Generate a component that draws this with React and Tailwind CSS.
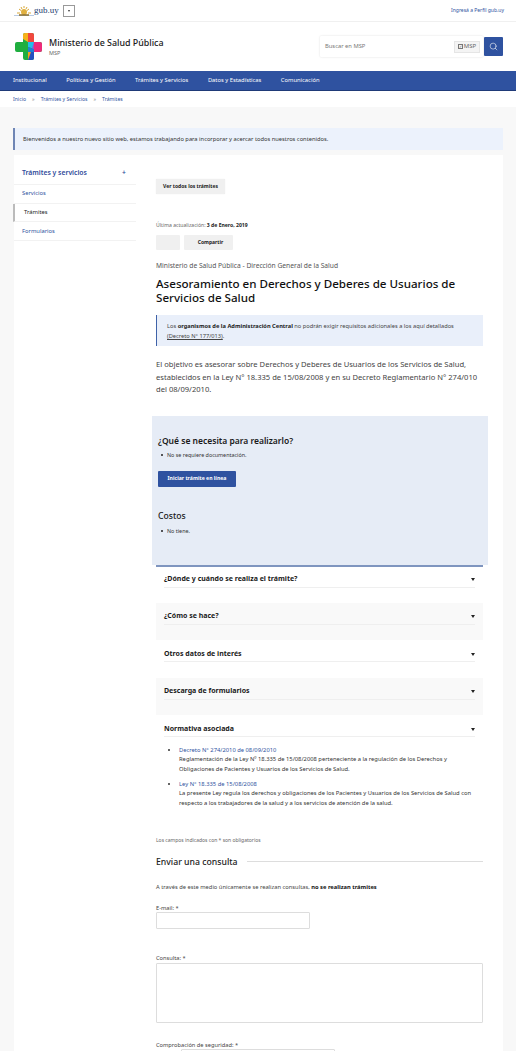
import { Search } from "lucide-react";

const navItems = ["Institucional", "Políticas y Gestión", "Trámites y Servicios", "Datos y Estadísticas", "Comunicación"];

function Logo() {
  return (
    <svg width="27" height="27" viewBox="0 0 27 27">
      <path d="M8 2a2 2 0 0 1 2-2h7a2 2 0 0 1 2 2v7h6a2 2 0 0 1 2 2v6a2 2 0 0 1-2 2h-6v6a2 2 0 0 1-2 2h-7a2 2 0 0 1-2-2v-6H2a2 2 0 0 1-2-2v-6a2 2 0 0 1 2-2h6z" fill="#1fae3f" />
      <path d="M10 0h3v9L8 6V2a2 2 0 0 1 2-2z" fill="#f6b21b" />
      <path d="M13 0h4a2 2 0 0 1 2 2v7h-6z" fill="#f0483e" />
      <path d="M19 9h6a2 2 0 0 1 2 2v6a2 2 0 0 1-2 2h-6z" fill="#ee2a7b" />
      <path d="M13 9h6v7l-6-2z" fill="#22bfe8" />
      <path d="M19 9v10h-3z" fill="#a24bd0" />
      <path d="M13 14l6 2v3h-6z" fill="#1f7fd6" />
      <path d="M13 19h6v6a2 2 0 0 1-2 2h-4z" fill="#2451c0" />
      <path d="M13 19h3l-3 8z" fill="#f2a01e" />
    </svg>
  );
}

function SunLogo() {
  return (
    <svg width="20" height="10" viewBox="0 0 20 10">
      <path d="M0 9.5h20" stroke="#b9cbe3" strokeWidth="1" />
      <circle cx="10" cy="6" r="3" fill="#e0b040" />
      <path d="M10 0v2M5 3l2 1.5M15 3l-2 1.5M3 7h3M17 7h-3M7 1l1 2M13 1l-1 2" stroke="#d9a83a" strokeWidth="1" />
      <path d="M5 9h10" stroke="#8a6d2a" strokeWidth="1.5" />
    </svg>
  );
}

function Accordion({ title, shaded, first, children }) {
  return (
    <div className={`px-[8px] ${first ? "pt-[5px]" : "pt-[6px]"} ${children ? "pb-0" : first ? "pb-[15px]" : "pb-[15.5px]"} ${shaded ? "bg-[#f9f9f9]" : "bg-white"}`}>
      <div className="flex h-[16px] items-center justify-between border-b border-[#efefef] pt-[1px]">
        <span className="text-[7px] font-bold text-[#1a1a1a]">{title}</span>
        <span className="h-0 w-0 border-x-[2px] border-t-[3px] border-x-transparent border-t-[#222]" />
      </div>
      {children}
    </div>
  );
}

function Bullet({ children }) {
  return (
    <div className="flex items-center gap-[4px] pl-[3px] text-[5.4px] leading-[10px] text-[#333]">
      <span className="h-[2px] w-[2px] rounded-full bg-[#222]" />
      {children}
    </div>
  );
}

export default function App() {
  return (
    <div className="h-[1051px] overflow-hidden bg-[#f8f8f8] font-['Noto_Sans',sans-serif] text-[#222]">
      {/* gub.uy bar */}
      <div className="flex h-[22px] items-center justify-between border-b border-[#f0f0f0] bg-white pl-[14px] pr-[12px]">
        <div className="flex items-center">
          <SunLogo />
          <span className="font-['Liberation_Serif',serif] text-[9px] text-[#23406f]">gub.uy</span>
          <span className="ml-[4px] flex h-[12px] w-[12px] items-center justify-center border border-[#999]">
            <span className="h-0 w-0 border-x-[1.5px] border-t-[2px] border-x-transparent border-t-[#333]" />
          </span>
        </div>
        <span className="text-[5px] text-[#2f52a0]">Ingresá a Perfil gub.uy</span>
      </div>

      {/* header */}
      <div className="flex h-[49px] items-center justify-between bg-white pl-[15px] pr-[13px]">
        <div className="flex items-center">
          <Logo />
          <div className="ml-[7px]">
            <div className="text-[8.9px] font-medium leading-[13px] text-[#1a1a1a]">Ministerio de Salud Pública</div>
            <div className="text-[5.5px] leading-[8px] text-[#666]">MSP</div>
          </div>
        </div>
        <div className="flex items-center">
          <div className="flex h-[21px] w-[163px] items-center justify-between rounded-[1px] bg-white pl-[5px] pr-[3px] shadow-[0_0_2px_rgba(0,0,0,0.15)]">
            <span className="text-[5.8px] text-[#777]">Buscar en MSP</span>
            <span className="flex h-[12px] w-[26px] items-center justify-center gap-[1px] border border-[#e5e5e5] bg-[#f4f4f4] text-[6px] text-[#666]">
              <span className="flex h-[5px] w-[5px] items-center justify-center border border-[#777] text-[4px] leading-none">✓</span>
              MSP
            </span>
          </div>
          <div className="ml-[1px] flex h-[19px] w-[19px] items-center justify-center rounded-[1px] bg-[#2f52a0]">
            <Search size={9} color="#fff" strokeWidth={1.5} />
          </div>
        </div>
      </div>

      {/* nav */}
      <div className="flex h-[20px] items-center gap-[19.5px] border-b border-[#1f3a78] bg-[#2f52a0] pl-[13px] text-[5.8px] text-white">
        {navItems.map((item) => (
          <span key={item}>{item}</span>
        ))}
      </div>

      {/* breadcrumb */}
      <div className="flex h-[16px] items-center gap-[6px] bg-white pl-[13px] pt-[1px] text-[5.1px] text-[#2f52a0]">
        <span>Inicio</span>
        <span className="text-[#888]">»</span>
        <span>Trámites y Servicios</span>
        <span className="text-[#888]">»</span>
        <span>Trámites</span>
      </div>

      {/* welcome */}
      <div className="px-[13px] pt-[21px]">
        <div className="flex h-[22px] w-[490px] items-center border-l-2 border-[#6f86b5] bg-[#ecf2fc] pl-[8px] text-[5.75px] text-[#333]">
          Bienvenidos a nuestro nuevo sitio web, estamos trabajando para incorporar y acercar todos nuestros contenidos.
        </div>
      </div>

      <div className="ml-[14px] mt-[5px] flex w-[489px]">
        {/* sidebar */}
        <aside className="w-[122px] shrink-0 bg-white text-[5.8px]">
          <div className="flex h-[30px] items-center justify-between border-b border-[#f2f2f2] pl-[8px] pr-[10px] pt-[8px] text-[6.8px] font-semibold text-[#2f4a9a]">
            <span>Trámites y servicios</span>
            <span>+</span>
          </div>
          <div className="flex h-[18.5px] items-center border-b border-[#f2f2f2] pl-[8px] text-[#2f52a0]">Servicios</div>
          <div className="-ml-[1px] flex h-[18.5px] items-center border-b border-l-2 border-[#f2f2f2] border-l-[#bbb] pl-[9px] text-[#222]">Trámites</div>
          <div className="flex h-[19px] items-center border-b border-[#f2f2f2] pl-[8px] text-[#2f52a0]">Formularios</div>
        </aside>

        {/* main */}
        <main className="min-w-0 flex-1 bg-white px-[20px] pt-[24px]">
          <button className="block h-[15px] w-[69px] rounded-[1px] bg-[#f0f0f0] text-[5px] font-bold text-[#222] shadow-[0_0_1px_rgba(0,0,0,0.15)]">Ver todos los trámites</button>

          <p className="mt-[27px] text-[5.1px] leading-[8px] text-[#666]">
            Última actualización: <b className="text-[#222]">3 de Enero, 2019</b>
          </p>
          <div className="mt-[6px] flex gap-[4px]">
            <span className="h-[15px] w-[24px] rounded-[1px] bg-[#f0f0f0]" />
            <span className="flex h-[15px] w-[49px] items-center justify-center rounded-[1px] bg-[#f0f0f0] pl-[4px] text-[5px] font-bold">Compartir</span>
          </div>
          <p className="mt-[11px] text-[6.7px] leading-[9px] text-[#555]">Ministerio de Salud Pública - Dirección General de la Salud</p>
          <h1 className="mt-[7px] text-[11.6px] font-medium leading-[14px] text-[#111]">Asesoramiento en Derechos y Deberes de Usuarios de Servicios de Salud</h1>

          <div className="mt-[10px] h-[31px] w-[327px] border-l-[1px] border-[#3f62a8] bg-[#e9effa] pl-[10px] pr-[14px] pt-[6px] text-[5.7px] leading-[10px] text-[#444]">
            Los <b className="text-[#222]">organismos de la Administración Central</b> no podrán exigir requisitos adicionales a los aquí detallados <span className="underline">(Decreto N° 177/013)</span>.
          </div>

          <p className="mt-[12px] w-[327px] text-[7.6px] leading-[12.5px] text-[#444]">
            El objetivo es asesorar sobre Derechos y Deberes de Usuarios de los Servicios de Salud, establecidos en la Ley N° 18.335 de 15/08/2008 y en su Decreto Reglamentario N° 274/010 del 08/09/2010.
          </p>

          {/* requisitos: sobresale 4px de cada lado */}
          <section className="-mx-[4px] mt-[20px] h-[149px] w-[336px] bg-[#e6ecf6] pl-[6px] pt-[18px]">
            <h2 className="text-[8.5px] font-semibold leading-[13px] text-[#1a1a1a]">¿Qué se necesita para realizarlo?</h2>
            <div className="mt-[3px]">
              <Bullet>No se requiere documentación.</Bullet>
            </div>
            <button className="mt-[11px] block h-[16px] w-[78px] rounded-[1px] bg-[#2f52a0] text-[5.15px] font-bold text-white">Iniciar trámite en línea</button>
            <h2 className="mt-[23px] text-[8.6px] font-medium leading-[13px] text-[#1a1a1a]">Costos</h2>
            <div className="mt-[3px]">
              <Bullet>No tiene.</Bullet>
            </div>
          </section>

          <div className="w-[327px] border-t-2 border-[#7f95bf]">
            <Accordion first title="¿Dónde y cuándo se realiza el trámite?" />
            <Accordion title="¿Cómo se hace?" shaded />
            <Accordion title="Otros datos de interés" />
            <Accordion title="Descarga de formularios" shaded />
            <Accordion title="Normativa asociada">
              <ul className="mt-[8.5px] list-disc pl-[15px] text-[5.8px] leading-[9.5px] text-[#333]">
                <li>
                  <span className="text-[#2f52a0]">Decreto N° 274/2010 de 08/09/2010</span>
                  <br />
                  Reglamentación de la Ley Nº 18.335 de 15/08/2008 perteneciente a la regulación de los Derechos y Obligaciones de Pacientes y Usuarios de los Servicios de Salud.
                </li>
                <li className="mt-[5.5px]">
                  <span className="text-[#2f52a0]">Ley N° 18.335 de 15/08/2008</span>
                  <br />
                  La presente Ley regula los derechos y obligaciones de los Pacientes y Usuarios de los Servicios de Salud con respecto a los trabajadores de la salud y a los servicios de atención de la salud.
                </li>
              </ul>
            </Accordion>
          </div>

          {/* formulario */}
          <p className="mt-[28.5px] text-[5px] leading-[7px] text-[#666]">Los campos indicados con * son obligatorios</p>
          <div className="mt-[12px] flex w-[327px] items-center gap-[9px]">
            <h2 className="text-[8.7px] font-medium leading-[12px] text-[#222]">Enviar una consulta</h2>
            <span className="h-px flex-1 bg-[#ddd]" />
          </div>
          <p className="mt-[15.5px] text-[5.75px] leading-[8px] text-[#444]">
            A través de este medio únicamente se realizan consultas, <b className="text-[#111]">no se realizan trámites</b>
          </p>
          <label className="mt-[13px] block text-[5.7px] leading-[8px] text-[#444]">E-mail: *</label>
          <div className="h-[17px] w-[154px] rounded-[1px] border border-[#ddd] bg-white" />
          <label className="mt-[25px] block text-[5.7px] leading-[8px] text-[#444]">Consulta: *</label>
          <div className="mt-[1px] h-[60px] w-[327px] rounded-[1px] border border-[#ddd] bg-white" />
          <label className="mt-[18px] block text-[5.7px] leading-[8px] text-[#444]">Comprobación de seguridad: *</label>
          <div className="ml-[25px] h-[17px] w-[154px] rounded-[1px] border border-[#ddd] bg-white" />
        </main>
      </div>
    </div>
  );
}
